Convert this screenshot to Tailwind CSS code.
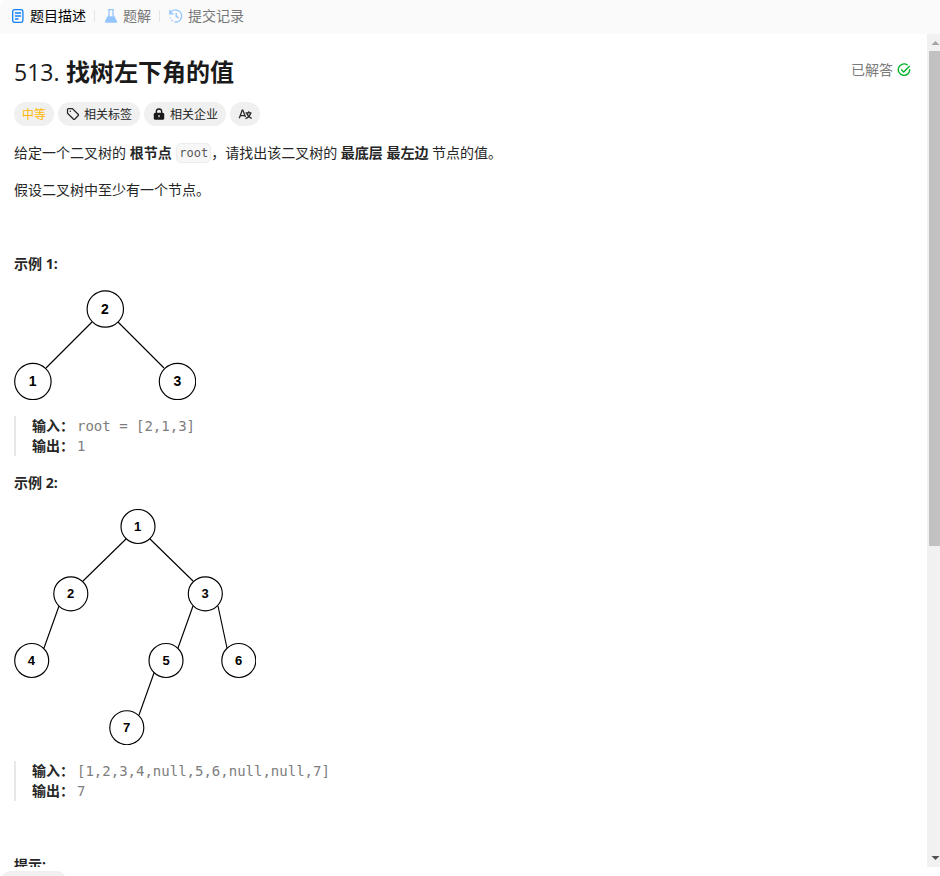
<!DOCTYPE html>
<html lang="zh-CN">
<head>
<meta charset="utf-8">
<title>513. 找树左下角的值</title>
<script src="https://cdn.jsdelivr.net/npm/@tailwindcss/browser@4"></script>
</head>
<body class="bg-white">
<div class="h-[876px] w-[940px] overflow-hidden bg-white font-['Open_Sans','Noto_Sans_CJK_SC',sans-serif] text-[14px] leading-5 text-[#262626] flex flex-col">
  <nav class="flex h-[34px] shrink-0 items-center rounded-tl-md bg-[#fafafa] pl-[11px] pb-[2px] text-[#767676]">
    <svg class="mr-[5px] h-[14px] w-[14px]" viewBox="0 0 14 14" fill="none" stroke="#1080f8" stroke-width="1.3"><rect x="1.7" y=".7" width="10.2" height="12.6" rx="1.8"/><path d="M4 4h6M4 7h6M4 10h3.500"/></svg>
    <span class="text-black">题目描述</span>
    <i class="ml-[8px] mr-[9px] h-3 w-px bg-[#e4e4e4]"></i>
    <svg class="mr-[5px] h-[14px] w-[14px]" viewBox="0 0 14 14"><path d="M4.200 .7h5.600M5 1v5L1.600 12.200Q1.300 13.200 2.300 13.200h9.400q1 0 .7-1L9 6V1" fill="none" stroke="#8fc3fd" stroke-width="1.2"/><path d="M4.200 7.200h5.600l2.700 5.800H1.500z" fill="#94c6fd"/></svg>
    <span>题解</span>
    <i class="ml-[8px] mr-[9px] h-3 w-px bg-[#e4e4e4]"></i>
    <svg class="mr-[5px] h-[14px] w-[14px]" viewBox="0 0 14 14" fill="none" stroke="#94c6fd" stroke-width="1.400"><path d="M.8 1v3.700h3.700M1.200 4.400A6 6 0 1 1 5.500 12.900M7.200 4v3.400l2.400 1.500"/><path d="M1.200 8.400l.3 1M2.500 11l1 .9"/></svg>
    <span>提交记录</span>
  </nav>
  <div class="flex h-[833px] shrink-0">
    <main class="h-[833px] min-w-0 flex-1 overflow-hidden pl-[14px] pt-[22px]">
      <header class="flex h-8 items-center justify-between pr-4">
        <h1 class="flex items-center text-[24px] leading-8 text-[#1a1a1a]"><span class="w-[52px] whitespace-nowrap text-[23px] font-medium">513.</span><span class="font-bold">找树左下角的值</span></h1>
        <div class="flex items-center gap-1 pb-1 text-[#7b7b7b]"><span>已解答</span>
          <svg class="h-[14px] w-[14px]" viewBox="0 0 14 14" fill="none" stroke="#02b128" stroke-width="1.400"><path d="M10.600 2.200A5.700 5.700 0 1 0 12.700 6.200M4.200 6.500l2.500 2.400 6-6"/></svg>
        </div>
      </header>
      <div class="mt-[14px] flex h-6 gap-1 text-[12px] leading-[25px]">
        <span class="w-10 rounded-full bg-[#f0f0f0] text-center text-[#ffb800]">中等</span>
        <span class="flex w-[82px] items-center rounded-full bg-[#f0f0f0] pl-2"><svg class="mr-1 h-[14px] w-[14px]" viewBox="0 0 14 14" fill="none" stroke="#262626" stroke-width="1.250"><path d="M1.500 2.400v3.800L7.300 12q.8.700 1.600 0l3.200-3.200q.8-.8 0-1.600L6.400 1.500H2.500q-1 0-1 .9z"/><circle cx="4.300" cy="4.300" r=".7" fill="#262626" stroke="none"/></svg>相关标签</span>
        <span class="flex w-[82px] items-center rounded-full bg-[#f0f0f0] pl-2"><svg class="mr-1 h-[14px] w-[14px]" viewBox="0 0 14 14"><path d="M4.300 6.500V4.700a2.700 2.700 0 0 1 5.400 0V6.500" fill="none" stroke="#1a1a1a" stroke-width="1.300"/><rect x="1.800" y="5.700" width="10.400" height="7" rx="1.500" fill="#1a1a1a"/><path d="M7 8v2.200" stroke="#f0f0f0" stroke-width="1.200"/></svg>相关企业</span>
        <span class="flex w-[30px] items-center justify-center rounded-full bg-[#f0f0f0]"><svg class="h-[14px] w-[14px]" viewBox="0 0 14 14" fill="none" stroke="#262626" stroke-width="1.250"><path d="M1.300 11.300L4.200 3.100h.6L7.500 10M2.400 8.500h4.200M7.500 5.800h6M10.700 4.200v1.600M8.800 6q1 3.800 4.900 5.500M12.700 6Q11.800 10 7.500 11.700"/></svg></span>
      </div>
      <p class="mt-[17px] h-5 whitespace-pre">给定一个二叉树的 <b>根节点</b> <code class="ml-px inline-block h-5 rounded-[5px] border border-[#ececec] bg-[#f7f7f7] px-[2px] align-top font-['DejaVu_Sans_Mono',monospace] text-[12px] leading-[18px] text-[#595959]">root</code>，请找出该二叉树的 <b>最底层</b> <b>最左边</b> 节点的值。</p>
      <p class="mt-[17px] h-5">假设二叉树中至少有一个节点。</p>
      <p class="mt-[54px] h-5 font-bold">示例 1:</p>
      <svg class="mt-4 h-[110px] w-[182px]" viewBox="14 290 182 110" fill="white" stroke="black" stroke-width="1.150">
        <path d="M92 322L46 368M118 322l46 46"/>
        <circle cx="105.300" cy="309" r="18.200"/><circle cx="32.900" cy="381.500" r="18.200"/><circle cx="177.500" cy="381.500" r="18.200"/>
        <g class="font-['Liberation_Sans',sans-serif] text-[14px] font-bold" fill="black" stroke="none" text-anchor="middle"><text x="105" y="314">2</text><text x="32.700" y="386.400">1</text><text x="177.500" y="386.400">3</text></g>
      </svg>
      <div class="mt-4 h-10 border-l-2 border-[#e8e8e8] pl-4 font-['DejaVu_Sans_Mono','Noto_Sans_CJK_SC',monospace] text-[#7d7d7d]">
        <div class="flex h-5 whitespace-pre"><b class="w-[45px] text-[#262626]">输入：</b>root = [2,1,3]</div>
        <div class="flex h-5"><b class="w-[45px] text-[#262626]">输出：</b>1</div>
      </div>
      <p class="mt-[17px] h-5 font-bold">示例 2:</p>
      <svg class="mt-4 h-[236px] w-[242px]" viewBox="14 509 242 236" fill="white" stroke="black" stroke-width="1.150">
        <path d="M126 539L83 581M150 539l43 42M59 606L44 648M193 606L178 648M218 606l9 42M154 673L139 715"/>
        <circle cx="138" cy="526.500" r="17"/><circle cx="70.800" cy="593.800" r="17"/><circle cx="205.300" cy="593.800" r="17"/><circle cx="31.700" cy="660.500" r="17"/><circle cx="166" cy="660.500" r="17"/><circle cx="238.800" cy="660.500" r="17"/><circle cx="126.800" cy="727.700" r="17"/>
        <g class="font-['Liberation_Sans',sans-serif] text-[13px] font-bold" fill="black" stroke="none" text-anchor="middle"><text x="137.700" y="531">1</text><text x="70.500" y="598.300">2</text><text x="205" y="598.300">3</text><text x="31.400" y="665">4</text><text x="166" y="665">5</text><text x="238.500" y="665">6</text><text x="126.500" y="732.300">7</text></g>
      </svg>
      <div class="mt-4 h-10 border-l-2 border-[#e8e8e8] pl-4 font-['DejaVu_Sans_Mono','Noto_Sans_CJK_SC',monospace] text-[#7d7d7d]">
        <div class="flex h-5"><b class="w-[45px] text-[#262626]">输入：</b>[1,2,3,4,null,5,6,null,null,7]</div>
        <div class="flex h-5"><b class="w-[45px] text-[#262626]">输出：</b>7</div>
      </div>
      <p class="mt-[54px] h-5 font-bold">提示:</p>
    </main>
    <aside class="flex w-[13px] shrink-0 flex-col bg-[#f1f1f1]">
      <svg class="h-[17px] w-[13px]" viewBox="0 0 13 17"><path d="M4.500 11h8L8.500 7z" fill="#a3a3a3"/></svg>
      <div class="ml-[2px] h-[495px] bg-[#c1c1c1]"></div>
      <div class="flex-1"></div>
      <svg class="h-[17px] w-[13px]" viewBox="0 0 13 17"><path d="M4.500 6h8L8.500 10z" fill="#505050"/></svg>
    </aside>
  </div>
  <footer class="h-[9px] shrink-0 overflow-hidden pl-[2px] pt-[4px]"><div class="h-7 w-[63px] rounded-lg bg-[#f0f0f0]"></div></footer>
</div>
</body>
</html>
